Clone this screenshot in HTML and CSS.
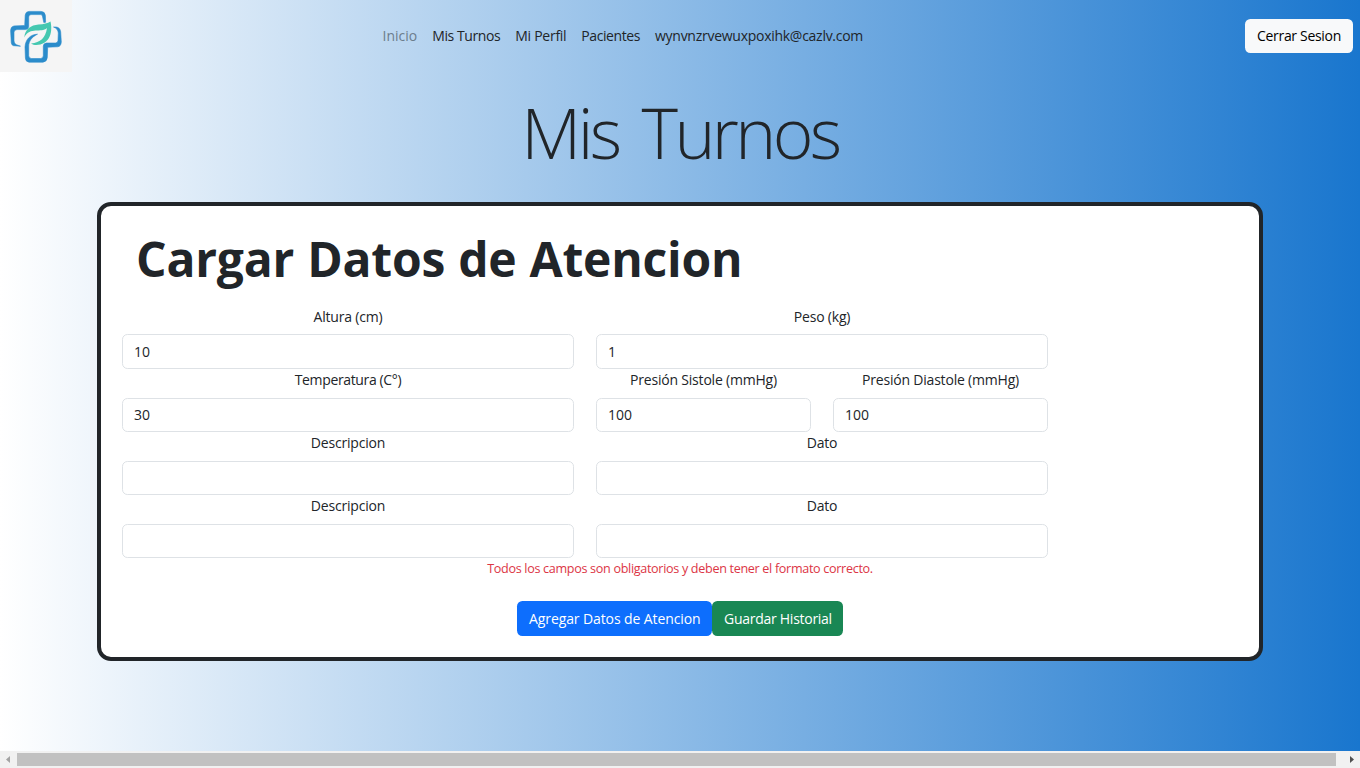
FILE: index.html
```html
<!DOCTYPE html>
<html lang="es">
<head>
<meta charset="utf-8">
<title>Mis Turnos</title>
<link rel="stylesheet" href="styles.css">
</head>
<body>
<div class="page">
  <nav class="navbar">
    <a class="brand" href="#">
      <svg class="logo" viewBox="0 0 72 72">
        <path class="logo-blue" d="M20.500 46.200L13.500 45.700Q11.600 45.300 11.300 43L10.600 30.500Q10.700 26.400 14 25.900L24.700 25.500L25.200 15Q25.800 11.500 29 11.400H41Q45 11.500 45.400 15.500L45.600 22.300L43.800 22.500L42.400 16Q42 14.600 40.500 14.600H31Q28.700 14.700 28.700 17V26.500Q28.400 29.400 25.500 29.600H17Q14.300 29.700 14 32V41Q14 44 16.500 44.700Z"/>
        <path class="logo-blue" d="M53.500 27C58.500 26.600 60.300 28.500 60.700 32L61.300 42Q61 46.500 57.500 46.800L47.700 47.200L47.300 57.500Q47 61.800 43 62.200H29Q25.600 62 25.400 58L25 47C25.500 39.500 30 34.500 37.500 34.200C31.500 37 28.800 41.500 28.700 46V55.500Q28.800 58.300 31.500 58.500H40.500Q43.300 58.400 43.300 55.500V46Q43.500 43.300 46.500 43H55.500Q58 42.800 58 40.500L58.300 33Q58 28.700 53.500 27Z"/>
        <path class="logo-green" d="M24.300 37.500C25 29 31 25.300 38.500 24.600C44 24 47.500 23.400 50.500 21.500C53.500 35 47.500 46.500 33.500 44.700L31 43.500C40.500 42.500 45.500 38 47 28C41 33.500 30 26 24.300 37.500Z"/>
      </svg>
    </a>
    <div class="links">
      <a class="link muted" href="#">Inicio</a>
      <a class="link tight" href="#">Mis Turnos</a>
      <a class="link" href="#">Mi Perfil</a>
      <a class="link tight" href="#">Pacientes</a>
      <a class="link" href="#">wynvnzrvewuxpoxihk@cazlv.com</a>
    </div>
    <button class="btn light">Cerrar Sesion</button>
  </nav>
  <h1 class="title">Mis Turnos</h1>
  <main class="card">
    <h2 class="heading">Cargar Datos de Atencion</h2>
    <form class="grid">
      <label class="field wide"><span class="label">Altura (cm)</span><input class="input" value="10"></label>
      <label class="field wide"><span class="label">Peso (kg)</span><input class="input" value="1"></label>
      <label class="field wide"><span class="label snug">Temperatura (C°)</span><input class="input" value="30"></label>
      <label class="field"><span class="label">Presión Sistole (mmHg)</span><input class="input" value="100"></label>
      <label class="field"><span class="label">Presión Diastole (mmHg)</span><input class="input" value="100"></label>
      <label class="field wide"><span class="label">Descripcion</span><input class="input"></label>
      <label class="field wide"><span class="label">Dato</span><input class="input"></label>
      <label class="field wide"><span class="label">Descripcion</span><input class="input"></label>
      <label class="field wide"><span class="label">Dato</span><input class="input"></label>
    </form>
    <p class="error">Todos los campos son obligatorios y deben tener el formato correcto.</p>
    <div class="actions">
      <button class="btn primary">Agregar Datos de Atencion</button>
      <button class="btn success">Guardar Historial</button>
    </div>
  </main>
</div>
<div class="scrollbar">
  <svg class="arrow" viewBox="0 0 17 17"><path class="arrow-off" d="M10 5v7L6 8.500z"/></svg>
  <div class="thumb"></div>
  <svg class="arrow end" viewBox="0 0 17 17"><path class="arrow-on" d="M7 5v7l4-3.500z"/></svg>
</div>
</body>
</html>
```
FILE: styles.css
```css
* { box-sizing: border-box; }
body {
  margin: 0;
  height: 768px;
  overflow: hidden;
  display: flex;
  flex-direction: column;
  font-family: "Open Sans", "Noto Sans", sans-serif;
  font-size: 14px;
  line-height: 21.6px;
  color: #212529;
}
.page { flex: 1; background: linear-gradient(to right, #fff, #1976ce); }
.navbar {
  height: 72px;
  display: flex;
  align-items: center;
  padding-right: 7px;
}
.brand { width: 72px; height: 72px; background: #f5f5f5; }
.logo { display: block; width: 72px; height: 72px; }
.logo-blue { fill: #2b8ccb; stroke: #2b8ccb; stroke-width: 0.6; }
.logo-green { fill: #45c8b0; }
.links { display: flex; gap: 15px; margin: 0 auto 0 310.6px; }
.link { color: #212529; text-decoration: none; white-space: nowrap; letter-spacing: -0.27px; }
.link.tight { letter-spacing: -0.42px; }
.link.muted { color: #6c7d8c; letter-spacing: 0; }
.btn {
  height: 34px;
  padding: 0 12px;
  border: 0;
  border-radius: 5.4px;
  font: inherit;
  white-space: nowrap;
}
.light { background: #f8f9fa; color: #000; width: 108px; letter-spacing: -0.32px; }
.title {
  margin: 0;
  height: 130px;
  padding-top: 17px;
  text-align: center;
  font-weight: 300;
  font-size: 69.5px;
  line-height: 86px;
  letter-spacing: -3.6px;
  word-spacing: 8.5px;
}
.card {
  width: 1166px;
  height: 459px;
  margin: 0 auto;
  padding: 17px 21px 0;
  background: #fff;
  border: 4px solid #212529;
  border-radius: 14px;
}
.heading {
  margin: 0;
  height: 82.6px;
  padding-left: 14px;
  font-size: 48px;
  line-height: 72px;
  font-weight: 700;
  letter-spacing: -0.2px;
  word-spacing: 0.8px;
}
.grid {
  display: grid;
  width: 926px;
  grid-template-columns: repeat(4, 215px);
  column-gap: 22px;
}
.field { display: flex; flex-direction: column; height: 63.2px; }
.wide { grid-column: span 2; }
.label { text-align: center; height: 28.8px; letter-spacing: -0.2px; }
.label.snug { letter-spacing: -0.36px; }
.input {
  width: 100%;
  height: 34.4px;
  padding: 0 11px;
  border: 1px solid #dee2e6;
  border-radius: 5.4px;
  font: inherit;
  color: #212529;
  background: #fff;
}
.error {
  margin: 0;
  text-align: center;
  color: #dc3545;
  font-size: 12.6px;
  line-height: 22.4px;
  letter-spacing: -0.32px;
}
.actions { display: flex; justify-content: center; margin-top: 20px; }
.primary, .success { color: #fff; height: 35px; padding-top: 1px; }
.primary { background: #0d6efd; width: 195px; letter-spacing: -0.1px; }
.success { background: #198754; width: 131px; letter-spacing: -0.27px; }
.scrollbar { height: 17px; display: flex; background: #f1f1f1; }
.arrow { width: 17px; height: 17px; }
.thumb { width: 1319px; height: 13px; margin-top: 2px; background: #c1c1c1; }
.end { margin-left: auto; }
.arrow-off { fill: #a3a3a3; }
.arrow-on { fill: #505050; }
```
